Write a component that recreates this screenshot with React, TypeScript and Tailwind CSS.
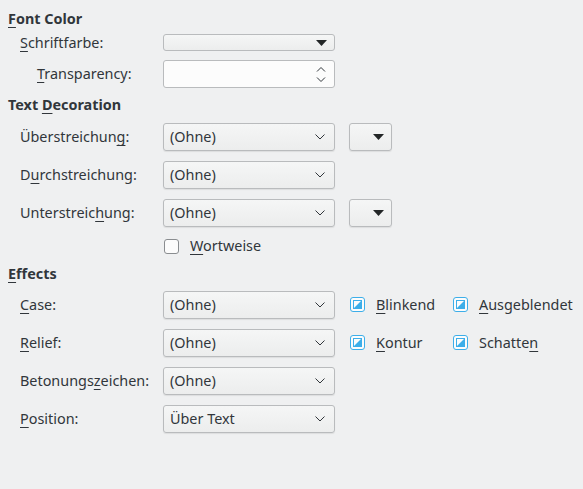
import React from "react";

const FONT = { fontFamily: '"Noto Sans", "Open Sans", sans-serif' };

function U({ children }: { children: React.ReactNode }) {
  return <span className="underline underline-offset-[3px] decoration-1">{children}</span>;
}

function Heading({ children, className = "" }: { children: React.ReactNode; className?: string }) {
  return (
    <div className={`h-[18px] leading-[18px] pl-[8px] font-bold ${className}`}>{children}</div>
  );
}

function Chevron() {
  return (
    <svg width="10" height="6" viewBox="0 0 10 6" className="shrink-0">
      <polyline points="0.5,0.5 5,5 9.5,0.5" fill="none" stroke="#31363b" strokeWidth="1" />
    </svg>
  );
}

function Triangle() {
  return (
    <svg width="11" height="6" viewBox="0 0 11 6" className="shrink-0">
      <polygon points="0,0 11,0 5.5,6" fill="#232627" />
    </svg>
  );
}

function Combo({ value }: { value: string }) {
  return (
    <div className="w-[172px] h-[28px] rounded-[3px] border border-[#b9bbbd] bg-gradient-to-b from-[#f5f6f6] to-[#eceded] shadow-[0_1px_1px_rgba(0,0,0,0.08)] flex items-center justify-between pl-[6px] pr-[9px]">
      <span>{value}</span>
      <Chevron />
    </div>
  );
}

function SmallButton() {
  return (
    <div className="ml-[14px] w-[43px] h-[28px] rounded-[3px] border border-[#b9bbbd] bg-gradient-to-b from-[#f5f6f6] to-[#eceded] shadow-[0_1px_1px_rgba(0,0,0,0.08)] flex items-center justify-end pr-[7px]">
      <Triangle />
    </div>
  );
}

function Check({ partial }: { partial?: boolean }) {
  if (!partial) {
    return (
      <div className="w-[15px] h-[15px] rounded-[3px] border border-[#8a8d90] bg-[#fcfcfc] shrink-0" />
    );
  }
  return (
    <svg width="15" height="15" viewBox="0 0 15 15" className="shrink-0">
      <rect x="0.5" y="0.5" width="14" height="14" rx="2.5" fill="#fcfcfc" stroke="#3daee9" />
      <rect x="3.5" y="3.5" width="8" height="8" fill="#fcfcfc" stroke="#3daee9" />
      <polygon points="4,11 11,11 11,4" fill="#3daee9" />
    </svg>
  );
}

function Row({
  label,
  indent = 20,
  children,
  className = "",
}: {
  label: React.ReactNode;
  indent?: number;
  children: React.ReactNode;
  className?: string;
}) {
  return (
    <div className={`flex items-center h-[28px] ${className}`}>
      <div className="w-[163px] shrink-0" style={{ paddingLeft: indent }}>
        {label}
      </div>
      {children}
    </div>
  );
}

function CheckLabel({ children, className = "" }: { children: React.ReactNode; className?: string }) {
  return (
    <div className={`flex items-center gap-[11px] ${className}`}>
      <Check partial />
      <span>{children}</span>
    </div>
  );
}

export default function App() {
  return (
    <div
      className="w-[583px] h-[489px] bg-[#eff0f1] text-[#31363b] text-[14.4px] pt-[10px] overflow-hidden"
      style={FONT}
    >
      <Heading>
        <U>F</U>ont Color
      </Heading>

      <div className="flex items-center h-[17px] mt-[6px]">
        <div className="w-[163px] pl-[20px] shrink-0">
          <U>S</U>chriftfarbe:
        </div>
        <div className="w-[172px] h-[17px] rounded-[3px] border border-[#b9bbbd] bg-gradient-to-b from-[#f5f6f6] to-[#eceded] flex items-center justify-end pr-[7px]">
          <Triangle />
        </div>
      </div>

      <Row
        className="mt-[9px]"
        indent={37}
        label={
          <>
            <U>T</U>ransparency:
          </>
        }
      >
        <div className="w-[172px] h-[28px] rounded-[3px] border border-[#b9bbbd] bg-[#fcfcfc] flex items-center justify-end pr-[8px]">
          <svg width="10" height="17" viewBox="0 0 10 17">
            <polyline points="1,5.5 5,1.5 9,5.5" fill="none" stroke="#31363b" strokeWidth="1" />
            <polyline points="1,11.5 5,15.5 9,11.5" fill="none" stroke="#31363b" strokeWidth="1" />
          </svg>
        </div>
      </Row>

      <Heading className="mt-[8px]">
        Text <U>D</U>ecoration
      </Heading>

      <Row
        className="mt-[9px]"
        label={
          <>
            Überstreichun<U>g</U>:
          </>
        }
      >
        <Combo value="(Ohne)" />
        <SmallButton />
      </Row>
      <Row
        className="mt-[10px]"
        label={
          <>
            D<U>u</U>rchstreichung:
          </>
        }
      >
        <Combo value="(Ohne)" />
      </Row>
      <Row
        className="mt-[10px]"
        label={
          <>
            Unterstreic<U>h</U>ung:
          </>
        }
      >
        <Combo value="(Ohne)" />
        <SmallButton />
      </Row>

      <div className="flex items-center h-[16px] mt-[11px] pl-[164px] gap-[11px]">
        <Check />
        <span>
          <U>W</U>ortweise
        </span>
      </div>

      <Heading className="mt-[11px]">
        <U>E</U>ffects
      </Heading>

      <Row
        className="mt-[8px]"
        label={
          <>
            <U>C</U>ase:
          </>
        }
      >
        <Combo value="(Ohne)" />
        <CheckLabel className="ml-[15px] w-[103px]">
          <U>B</U>linkend
        </CheckLabel>
        <CheckLabel>
          <U>A</U>usgeblendet
        </CheckLabel>
      </Row>
      <Row
        className="mt-[10px]"
        label={
          <>
            <U>R</U>elief:
          </>
        }
      >
        <Combo value="(Ohne)" />
        <CheckLabel className="ml-[15px] w-[103px]">
          <U>K</U>ontur
        </CheckLabel>
        <CheckLabel>
          Schatte<U>n</U>
        </CheckLabel>
      </Row>
      <Row
        className="mt-[10px]"
        label={
          <>
            Betonungs<U>z</U>eichen:
          </>
        }
      >
        <Combo value="(Ohne)" />
      </Row>
      <Row
        className="mt-[10px]"
        label={
          <>
            <U>P</U>osition:
          </>
        }
      >
        <Combo value="Über Text" />
      </Row>
    </div>
  );
}
